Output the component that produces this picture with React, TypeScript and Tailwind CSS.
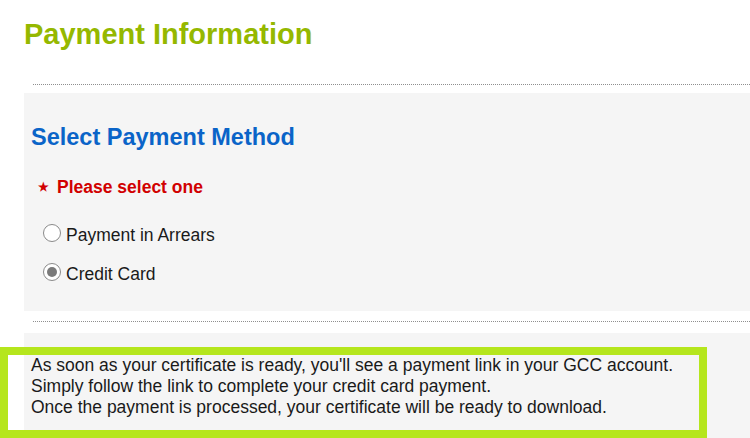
import React from "react";

function Radio({ checked, label }: { checked?: boolean; label: string }) {
  return (
    <label className="flex items-center gap-[5px]">
      <span className="mb-[3px] ml-[12px] flex h-[18px] w-[18px] items-center justify-center rounded-full border border-[#8a8a8a] bg-white">
        {checked && <span className="h-[10px] w-[10px] rounded-full bg-[#7a7a7a]" />}
      </span>
      <span className="text-[17.5px] leading-[20px] text-[#1a1a1a]">{label}</span>
    </label>
  );
}

export default function App() {
  return (
    <div className="relative h-[438px] w-[750px] overflow-hidden bg-white font-['Liberation_Sans',Arial,sans-serif]">
      <h1 className="pl-[24px] pt-[18px] text-[29px] font-bold leading-[32px] text-[#95b800]">
        Payment Information
      </h1>

      <div className="ml-[33px] mt-[34px] border-t border-dotted border-[#8f8f8f]" />

      {/* payment method */}
      <div className="ml-[24px] mt-[8px] bg-[#f5f5f5] pb-[27px] pl-[7px] pt-[31px]">
        <h2 className="text-[23.5px] font-bold leading-[26px] text-[#0a64c8]">Select Payment Method</h2>
        <div className="mt-[27px] flex items-center gap-[8px] pl-[7px] text-[17.5px] font-bold leading-[20px] text-[#d10000]">
          <span className="text-[12px] leading-none">★</span>
          Please select one
        </div>
        <div className="mt-[27px] flex flex-col gap-[18px]">
          <Radio label="Payment in Arrears" />
          <Radio checked label="Credit Card" />
        </div>
      </div>

      <div className="ml-[33px] mt-[10px] border-t border-dotted border-[#8f8f8f]" />

      {/* notice */}
      <div className="ml-[24px] mt-[11px] h-[120px] bg-[#f5f5f5] pl-[7px] pt-[22px] text-[17.5px] leading-[21px] text-[#1a1a1a]">
        <p>As soon as your certificate is ready, you'll see a payment link in your GCC account.</p>
        <p>Simply follow the link to complete your credit card payment.</p>
        <p>Once the payment is processed, your certificate will be ready to download.</p>
      </div>

      <div className="absolute left-0 top-[347px] h-[91px] w-[707px] border-[8px] border-[#b5e61d]" />
    </div>
  );
}
